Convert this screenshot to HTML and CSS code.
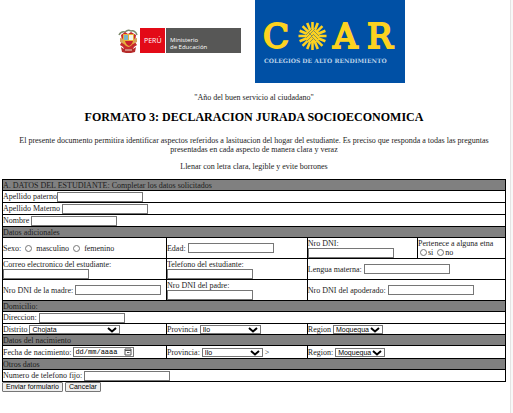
FILE: index.html
```html
<!DOCTYPE html>
<html lang="es">
<head>
<meta charset="utf-8">
<meta name="viewport" content="width=device-width, initial-scale=1">
<title>Formato 3: Declaracion jurada socioeconomica</title>
<link rel="stylesheet" href="styles.css">
</head>
<body>
<main class="page">
  <header class="logos">
    <svg class="logo" viewBox="0 0 150 83" role="img" aria-label="Ministerio de Educación">
      <path d="M16 35q2-4 6-3q3-3 6-1q4-1 6 4" fill="none" stroke="#7c8a6c" stroke-width="1.5"/>
      <path d="M18 35l4-3 3 2 3-2 5 3-1 7 2 3-3 2-2 4H22l-2-4-3-2 2-4z" fill="#c62a2c"/>
      <path d="M17 38l4 1v5l-4-2zM34 38l-4 1v5l4-2z" fill="#d9a25c"/>
      <path d="M20 34h11v8q-2 4-5.500 5q-4-1-5.500-5z" fill="#e7b23b"/>
      <path d="M21 35h4v5h-4z" fill="#79b6cc"/>
      <path d="M26 35h4v5h-4z" fill="#f5f3e8"/>
      <path d="M22 41h8q-1 4-4 5q-3-1-4-5z" fill="#c8202b"/>
      <path d="M18 47l3 2h9l3-2-1 5-4 1h-5l-4-1z" fill="#b52a2a"/>
      <path d="M22 50h7" stroke="#efd9c8" stroke-width="1"/>
      <rect x="37" y="28" width="25" height="25" fill="#e30a17"/>
      <rect x="63" y="28" width="75" height="25" fill="#575756"/>
      <text class="logo-sans" x="41" y="43" font-size="7">PERÚ</text>
      <text class="logo-sans" x="67" y="42" font-size="6">Ministerio</text>
      <text class="logo-sans" x="67" y="49" font-size="6">de Educación</text>
    </svg>
    <svg class="logo" viewBox="0 0 150 83" role="img" aria-label="COAR Colegios de Alto Rendimiento">
      <rect width="150" height="83" fill="#0050a5"/>
      <g class="logo-slab">
        <text x="8" y="48" font-size="34">C</text>
        <text x="78" y="48" font-size="34">A</text>
        <text x="112" y="48" font-size="34">R</text>
      </g>
      <g fill="none" stroke="#fdd220" stroke-width="2.600">
        <path d="M57.500 22v28M43.500 36h28M47.600 26.100l19.800 19.800M67.400 26.100L47.600 45.900"/>
        <path d="M52.200 23.100l10.600 25.800M62.800 23.100L52.200 48.900M44.600 30.700l25.800 10.600M70.400 30.700L44.600 41.300"/>
      </g>
      <circle cx="57.500" cy="36" r="7" fill="#fdd220"/>
      <path d="M51 35l6-6M51 38l9-9M52 41l6-6M55 42l3-3M59 31l5 5M58 34l5 5M57 37l4 4M53 32l4 4" fill="none" stroke="#5e7a68" stroke-width=".7"/>
      <text class="logo-tag" x="9" y="63" font-size="6">COLEGIOS DE ALTO RENDIMIENTO</text>
    </svg>
  </header>

  <p class="motto">"Año del buen servicio al ciudadano"</p>
  <h1>FORMATO 3: DECLARACION JURADA SOCIOECONOMICA</h1>
  <p>El presente documento permitira identificar aspectos referidos a lasituacion del hogar del estudiante. Es preciso que responda a todas las preguntas presentadas en cada aspecto de manera clara y veraz</p>
  <p>Llenar con letra clara, legible y evite borrones</p>

  <form>
    <table>
      <colgroup><col class="c1"><col class="c2"><col class="c3"><col class="c4"></colgroup>
      <tbody>
        <tr><th colspan="4">A. DATOS DEL ESTUDIANTE: Completar los datos solicitados</th></tr>
        <tr class="entry"><td colspan="4"><div class="field tight"><label for="paterno">Apellido paterno</label><input type="text" id="paterno"></div></td></tr>
        <tr class="entry"><td colspan="4"><div class="field"><label for="materno">Apellido Materno</label><input type="text" id="materno"></div></td></tr>
        <tr class="entry"><td colspan="4"><div class="field"><label for="nombre">Nombre</label><input type="text" id="nombre"></div></td></tr>
        <tr><th colspan="4">Datos adicionales</th></tr>
        <tr class="tall">
          <td><div class="field radios"><span>Sexo:</span><input type="radio" name="sexo" id="masc"><label for="masc">masculino</label><input type="radio" name="sexo" id="fem"><label for="fem">femenino</label></div></td>
          <td><div class="field"><label for="edad">Edad:</label><input type="text" id="edad"></div></td>
          <td><div class="field stacked"><label for="dni">Nro DNI:</label><input type="text" id="dni"></div></td>
          <td><div class="field stacked"><span>Pertenece a alguna etna</span><div class="options"><input type="radio" name="etnia" id="si"><label for="si">si</label><input type="radio" name="etnia" id="no"><label for="no">no</label></div></div></td>
        </tr>
        <tr class="tall">
          <td><div class="field stacked"><label for="correo">Correo electronico del estudiante:</label><input type="text" id="correo"></div></td>
          <td><div class="field stacked"><label for="telefono">Telefono del estudiante:</label><input type="text" id="telefono"></div></td>
          <td colspan="2"><div class="field"><label for="lengua">Lengua materna:</label><input type="text" id="lengua"></div></td>
        </tr>
        <tr class="tall">
          <td><div class="field"><label for="madre">Nro DNI de la madre:</label><input type="text" id="madre"></div></td>
          <td><div class="field stacked"><label for="padre">Nro DNI del padre:</label><input type="text" id="padre"></div></td>
          <td colspan="2"><div class="field"><label for="apoderado">Nro DNI del apoderado:</label><input type="text" id="apoderado"></div></td>
        </tr>
        <tr><th colspan="4">Domicilio:</th></tr>
        <tr class="entry"><td colspan="4"><div class="field"><label for="direccion">Direccion:</label><input type="text" id="direccion"></div></td></tr>
        <tr>
          <td><div class="field"><label for="distrito">Distrito</label><span class="select wide"><select id="distrito"><option>Chojata</option></select><svg viewBox="0 0 10 6"><path d="M1 1l4 3.500L9 1"/></svg></span></div></td>
          <td><div class="field"><label for="prov1">Provincia</label><span class="select medium"><select id="prov1"><option>Ilo</option></select><svg viewBox="0 0 10 6"><path d="M1 1l4 3.500L9 1"/></svg></span></div></td>
          <td colspan="2"><div class="field"><label for="reg1">Region</label><span class="select small"><select id="reg1"><option>Moquegua</option></select><svg viewBox="0 0 10 6"><path d="M1 1l4 3.500L9 1"/></svg></span></div></td>
        </tr>
        <tr><th colspan="4">Datos del nacimiento</th></tr>
        <tr class="birth">
          <td><div class="field"><label for="fecha">Fecha de nacimiento:</label><span class="date"><input type="text" id="fecha" value="dd/mm/aaaa"><svg viewBox="0 0 8 8"><path d="M1 1h6v6H1zM1 2.500h6M3 4.500h2.500" /></svg></span></div></td>
          <td><div class="field"><label for="prov2">Provincia:</label><span class="select medium"><select id="prov2"><option>Ilo</option></select><svg viewBox="0 0 10 6"><path d="M1 1l4 3.500L9 1"/></svg></span><span>&gt;</span></div></td>
          <td colspan="2"><div class="field"><label for="reg2">Region:</label><span class="select small"><select id="reg2"><option>Moquegua</option></select><svg viewBox="0 0 10 6"><path d="M1 1l4 3.500L9 1"/></svg></span></div></td>
        </tr>
        <tr><th colspan="4">Otros datos</th></tr>
        <tr class="entry"><td colspan="4"><div class="field"><label for="fijo">Numero de telefono fijo:</label><input type="text" id="fijo"></div></td></tr>
      </tbody>
    </table>
    <div class="actions"><button type="submit">Enviar formulario</button><button type="reset">Cancelar</button></div>
  </form>
</main>
</body>
</html>
```
FILE: styles.css
```css
* { box-sizing: border-box; }

html { background: #f8f8f8; }

body {
  margin: 0;
  font: 8px/9px "Liberation Serif", serif;
  color: #1c1c1c;
}

.page {
  min-height: 100vh;
  margin-right: 2px;
  padding: 0 4px 0 2px;
  border-right: 1px solid #e4e4e4;
  background: #fff;
}

.logos {
  display: flex;
  justify-content: center;
  gap: 2px;
}

.logo { width: 150px; height: 83px; }
.logo-sans { font-family: "Open Sans", sans-serif; fill: #fff; }
.logo-slab { font-family: "DejaVu Serif", serif; fill: #fdd220; stroke: #fdd220; stroke-width: 2px; }
.logo-tag { font-family: "DejaVu Serif", serif; font-weight: bold; fill: #b9d0e8; }

p { margin: 8px 0; padding: 0 8px; text-align: center; }
.motto { margin-top: 10px; }

h1 {
  margin: 8px 0 11px;
  font-size: 12px;
  line-height: 15px;
  text-align: center;
  color: #000;
}

table {
  width: 100%;
  table-layout: fixed;
  border-collapse: collapse;
  border: 1px solid #000;
}

.c1 { width: 32.6%; }
.c2 { width: 28%; }
.c3 { width: 21.9%; }
.c4 { width: 17.5%; }

tr { height: 11px; }
.entry { height: 12px; }
.birth { height: 13px; }
.tall { height: 21px; }

th, td {
  padding: 0;
  border: 1px solid #000;
  text-align: left;
  font-weight: normal;
  white-space: nowrap;
}

th { background: #808080; }

.field { display: flex; align-items: center; gap: 2px; }
.tight { gap: 0; }
.stacked { flex-direction: column; align-items: flex-start; gap: 0; }
.radios { gap: 4px; }
.options { display: flex; align-items: center; gap: 1px; padding-left: 2px; }
.options label + input { margin-left: 3px; }

input[type="text"] {
  width: 86px;
  height: 10px;
  margin: 0;
  padding: 0 1px;
  border: 1px solid #767676;
  background: #fff;
  font: 7px/8px "Liberation Sans", sans-serif;
}

input[type="radio"] { width: 7px; height: 7px; margin: 0; }

.select, .date { position: relative; display: flex; }
.wide { width: 91px; }
.medium { width: 61px; }
.small { width: 50px; }

select {
  appearance: none;
  width: 100%;
  height: 9px;
  margin: 0;
  padding: 0 2px;
  border: 1px solid #767676;
  border-radius: 0;
  background: #fff;
  color: #000;
  font: 7px/7px "Liberation Sans", sans-serif;
}

.select svg {
  position: absolute;
  top: 2px;
  right: 3px;
  width: 10px;
  height: 6px;
  fill: none;
  stroke: #000;
  stroke-width: 2px;
  pointer-events: none;
}

.date input[type="text"] { width: 61px; font-family: "Liberation Mono", monospace; }

.date svg {
  position: absolute;
  top: 1px;
  right: 2px;
  width: 8px;
  height: 8px;
  fill: none;
  stroke: #555;
  stroke-width: 1px;
}

.actions { display: flex; gap: 2px; }

button {
  height: 10px;
  margin: 0;
  padding: 0 3px;
  border: 1px solid #767676;
  border-radius: 1px;
  background: #efefef;
  color: #000;
  font: 7px/8px "Liberation Sans", sans-serif;
}
```
